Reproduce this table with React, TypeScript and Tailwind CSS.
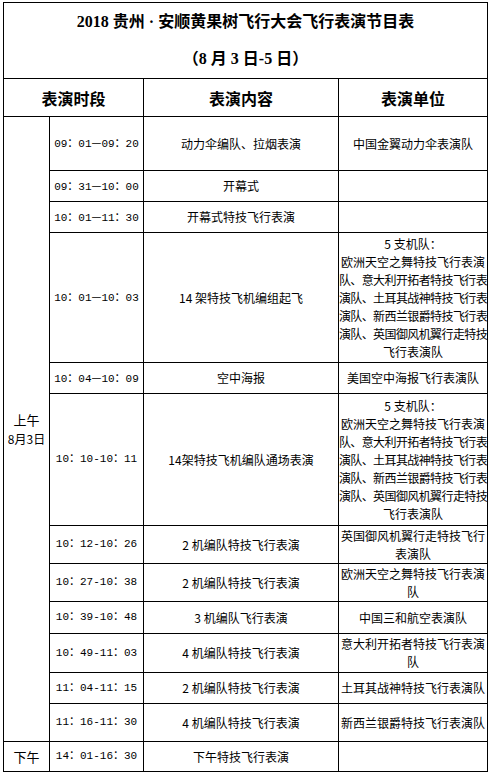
import React from "react";

type Row = {
  h: string;
  time: React.ReactNode;
  content: string;
  unit: string[];
};

const LONG = (a: string, b: string) => (
  <>
    {a}
    <span className="font-['Noto_Sans_CJK_SC',sans-serif]">—</span>
    {b}
  </>
);

const FIVE = [
  "5 支机队：",
  "欧洲天空之舞特技飞行表演",
  "队、意大利开拓者特技飞行表",
  "演队、土耳其战神特技飞行表",
  "演队、新西兰银爵特技飞行表",
  "演队、英国御风机翼行走特技",
  "飞行表演队",
];

const rows: Row[] = [
  { h: "h-[54px]", time: LONG("09：01", "09：20"), content: "动力伞编队、拉烟表演", unit: ["中国金翼动力伞表演队"] },
  { h: "h-[31px]", time: LONG("09：31", "10：00"), content: "开幕式", unit: [] },
  { h: "h-[31px]", time: LONG("10：01", "11：30"), content: "开幕式特技飞行表演", unit: [] },
  { h: "h-[130px]", time: LONG("10：01", "10：03"), content: "14 架特技飞机编组起飞", unit: FIVE },
  { h: "h-[31px]", time: LONG("10：04", "10：09"), content: "空中海报", unit: ["美国空中海报飞行表演队"] },
  { h: "h-[132px]", time: "10：10-10：11", content: "14架特技飞机编队通场表演", unit: FIVE },
  { h: "h-[38px]", time: "10：12-10：26", content: "2 机编队特技飞行表演", unit: ["英国御风机翼行走特技飞行", "表演队"] },
  { h: "h-[38px]", time: "10：27-10：38", content: "2 机编队特技飞行表演", unit: ["欧洲天空之舞特技飞行表演", "队"] },
  { h: "h-[32px]", time: "10：39-10：48", content: "3 机编队飞行表演", unit: ["中国三和航空表演队"] },
  { h: "h-[39px]", time: "10：49-11：03", content: "4 机编队特技飞行表演", unit: ["意大利开拓者特技飞行表演", "队"] },
  { h: "h-[31px]", time: "11：04-11：15", content: "2 机编队特技飞行表演", unit: ["土耳其战神特技飞行表演队"] },
  { h: "h-[38px]", time: "11：16-11：30", content: "4 机编队特技飞行表演", unit: ["新西兰银爵特技飞行表演队"] },
];

const cell = "border border-black p-0 text-center align-middle";
const timeFont = "font-['Liberation_Mono','Noto_Sans_CJK_SC',monospace] text-[11px] whitespace-nowrap";

function Unit({ lines }: { lines: string[] }) {
  return (
    <div className="flex flex-col items-center leading-[18px] text-[12px]">
      {lines.map((l, i) => (
        <span
          key={i}
          className={
            "whitespace-nowrap " + ([...l].length > 12 ? "tracking-[-0.6px]" : "")
          }
        >
          {l}
        </span>
      ))}
    </div>
  );
}

export default function App() {
  return (
    <div className="bg-white w-[490px] h-[777px] pt-[2px] pl-[3px] text-black font-['Noto_Sans_CJK_SC',sans-serif]">
      <table className="border-collapse table-fixed w-[484px]">
        <colgroup>
          <col className="w-[46px]" />
          <col className="w-[94px]" />
          <col className="w-[195px]" />
          <col className="w-[149px]" />
        </colgroup>
        <tbody>
          <tr className="h-[76px]">
            <td colSpan={4} className={cell}>
              <div className="flex flex-col items-center font-bold text-[16px] font-['Liberation_Serif','Noto_Sans_CJK_SC',serif] pb-[1px]">
                <span className="leading-[37px]">2018 贵州 · 安顺黄果树飞行大会飞行表演节目表</span>
                <span className="leading-[37px]">（8 月 3 日-5 日）</span>
              </div>
            </td>
          </tr>
          <tr className="h-[38px]">
            <td colSpan={2} className={cell + " font-bold text-[16px]"}>表演时段</td>
            <td className={cell + " font-bold text-[16px]"}>表演内容</td>
            <td className={cell + " font-bold text-[16px]"}>表演单位</td>
          </tr>
          {rows.map((r, i) => (
            <tr key={i} className={r.h}>
              {i === 0 && (
                <td rowSpan={12} className={cell + " text-[12px] leading-[19px]"}>
                  <div className="flex flex-col items-center">
                    <span className="text-[13px]">上午</span>
                    <span className="whitespace-nowrap">8月3日</span>
                  </div>
                </td>
              )}
              <td className={cell + " " + timeFont}>{r.time}</td>
              <td className={cell + " text-[12px]"}>{r.content}</td>
              <td className={cell}>
                <Unit lines={r.unit} />
              </td>
            </tr>
          ))}
          <tr className="h-[30px]">
            <td className={cell + " text-[13px]"}>下午</td>
            <td className={cell + " " + timeFont}>14：01-16：30</td>
            <td className={cell + " text-[12px]"}>下午特技飞行表演</td>
            <td className={cell}></td>
          </tr>
        </tbody>
      </table>
    </div>
  );
}
